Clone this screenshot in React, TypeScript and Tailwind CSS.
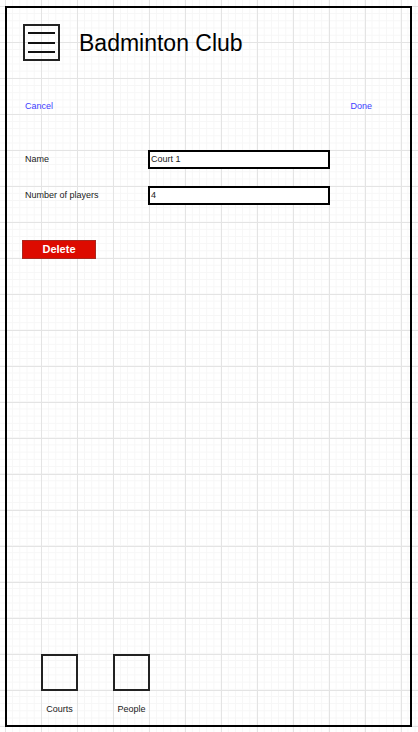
export default function App() {
  return (
    <div
      className="w-[418px] h-[732px] bg-white pt-[6px] pl-[5px] font-['Liberation_Sans',Arial,sans-serif] text-[#1a1a1a] bg-[image:linear-gradient(to_right,#e4e4e4_1px,transparent_1px),linear-gradient(to_bottom,#e4e4e4_1px,transparent_1px),linear-gradient(to_right,#f6f6f6_1px,transparent_1px),linear-gradient(to_bottom,#f6f6f6_1px,transparent_1px)] bg-[size:36px_36px,36px_36px,7.2px_7.2px,7.2px_7.2px] bg-[position:5px_6px,5px_6px,5px_6px,5px_6px]"
    >
      <div className="w-[407px] h-[721px] border-2 border-black flex flex-col">
        <header className="mt-[16px] ml-[16px] flex items-center h-[37px]">
          <button className="w-[37px] h-[37px] border-2 border-[#222] flex flex-col items-center justify-center gap-[7.5px]">
            <span className="block w-[27px] h-[2px] bg-[#111]" />
            <span className="block w-[27px] h-[2px] bg-[#111]" />
            <span className="block w-[27px] h-[2px] bg-[#111]" />
          </button>
          <h1 className="ml-[19px] text-[23px] leading-[28px] text-black">
            Badminton Club
          </h1>
        </header>

        <div className="mt-[39px] h-[12px] flex items-center justify-between pl-[18px] pr-[38px] text-[9px] leading-[12px] text-[#4040ff]">
          <span>Cancel</span>
          <span>Done</span>
        </div>

        <div className="mt-[38px] flex items-center h-[19px]">
          <label className="w-[141px] pl-[18px] text-[9px] pt-[1px]">Name</label>
          <div className="w-[182px] h-[19px] border-2 border-black bg-white flex items-center pl-[1px] text-[9px]">
            Court 1
          </div>
        </div>
        <div className="mt-[17px] flex items-center h-[19px]">
          <label className="w-[141px] pl-[18px] text-[9px] pt-[1px]">
            Number of players
          </label>
          <div className="w-[182px] h-[19px] border-2 border-black bg-white flex items-center pl-[1px] text-[9px]">
            4
          </div>
        </div>

        <button className="mt-[35px] ml-[15px] w-[74px] h-[19px] bg-[#dd0b00] border border-[#a8281e] text-white font-bold text-[11px] leading-[17px]">
          Delete
        </button>

        <div className="flex-1" />

        <nav className="ml-[34px] pb-[10px] flex gap-[35px]">
          {["Courts", "People"].map((n) => (
            <div key={n} className="w-[37px] flex flex-col items-center">
              <div className="w-[37px] h-[37px] border-2 border-[#222]" />
              <span className="mt-[12px] h-[12px] leading-[12px] text-[9px] whitespace-nowrap">
                {n}
              </span>
            </div>
          ))}
        </nav>
      </div>
    </div>
  );
}
